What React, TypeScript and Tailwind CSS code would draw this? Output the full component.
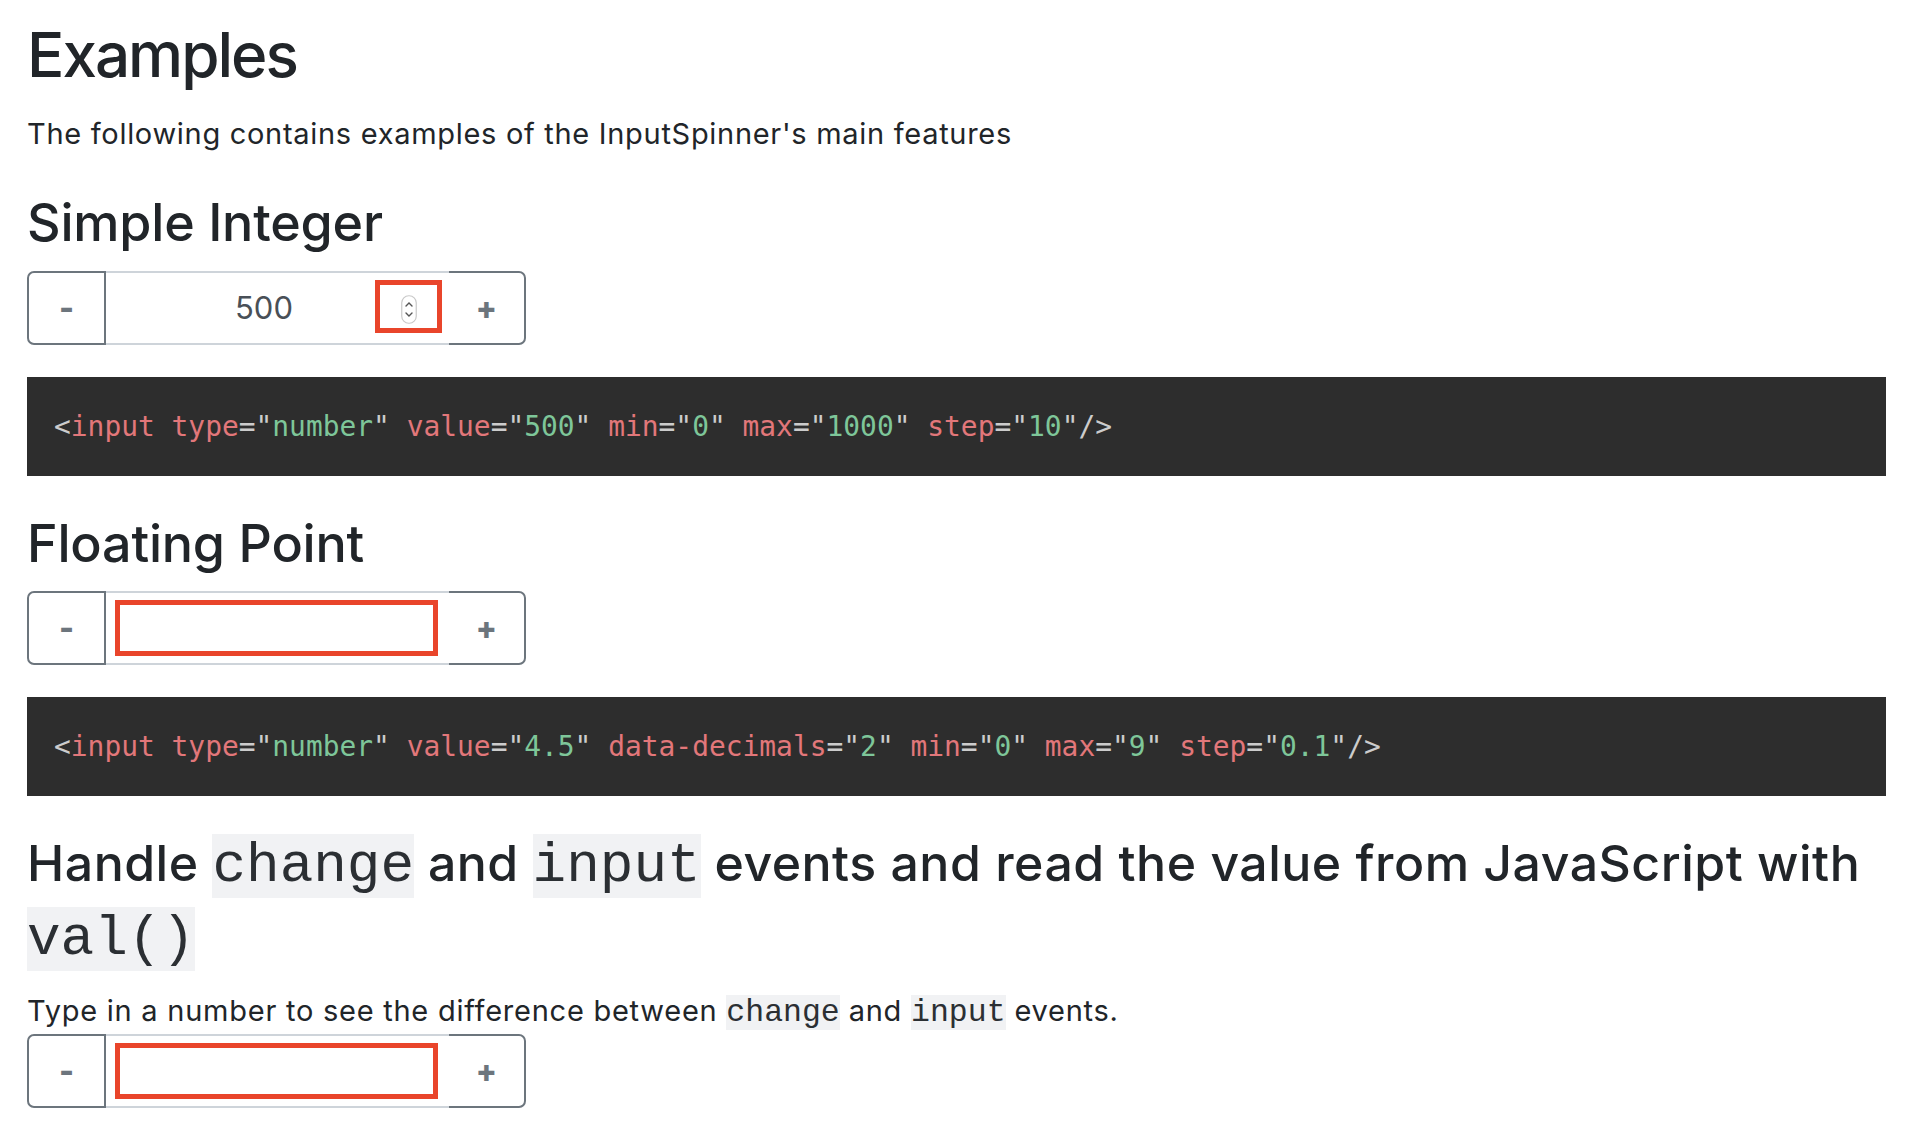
import React from 'react';

const sans = "font-['Inter','Helvetica_Neue',Arial,sans-serif]";
const mono = "font-['Liberation_Mono','Courier_New',monospace]";

type Tok = { t: string; c: 'p' | 'a' | 'v' };

function tokens(attrs: [string, string][]): Tok[] {
  const out: Tok[] = [{ t: '<', c: 'p' }, { t: 'input', c: 'a' }];
  attrs.forEach(([name, value]) => {
    out.push({ t: ' ' + name, c: 'a' });
    out.push({ t: '="', c: 'p' });
    out.push({ t: value, c: 'v' });
    out.push({ t: '"', c: 'p' });
  });
  out.push({ t: '/>', c: 'p' });
  return out;
}

const tokColor = {
  p: 'text-[#cccccc]',
  a: 'text-[#e2777a]',
  v: 'text-[#7ec699]',
};

function CodeBlock({ attrs }: { attrs: [string, string][] }) {
  return (
    <div className="mt-[32px] flex h-[99px] items-center bg-[#2d2d2d] pl-[27px]">
      <code className="whitespace-pre font-['DejaVu_Sans_Mono',monospace] text-[27.9px]">
        {tokens(attrs).map((tk, i) => (
          <span key={i} className={tokColor[tk.c]}>
            {tk.t}
          </span>
        ))}
      </code>
    </div>
  );
}

function NativeArrows() {
  return (
    <svg width="16" height="29" viewBox="0 0 16 29" className="absolute left-[295px] top-[22px]">
      <rect x="0.75" y="0.75" width="14.5" height="27.5" rx="7" fill="#fff" stroke="#c9c9c9" strokeWidth="1.2" />
      <path d="M5 11 L8 8 L11 11" fill="none" stroke="#555" strokeWidth="1.4" strokeLinecap="round" />
      <path d="M5 18 L8 21 L11 18" fill="none" stroke="#555" strokeWidth="1.4" strokeLinecap="round" />
    </svg>
  );
}

function Spinner({ value, mark }: { value?: string; mark: 'arrows' | 'field' }) {
  return (
    <div className={`flex h-[74px] w-[499px] ${sans}`}>
      <button className="w-[79px] rounded-l-[7px] border-2 border-[#6c757d] bg-white text-[32px] font-extrabold text-[#6c757d]">
        -
      </button>
      <div className="relative flex flex-1 items-center justify-center border-y-2 border-[#ced4da] bg-white pr-[27px] text-[31px] text-[#495057]">
        {value}
        {mark === 'arrows' ? (
          <>
            <NativeArrows />
            <div className="absolute left-[269px] top-[7px] h-[53px] w-[67px] border-[5px] border-[#e9452b]" />
          </>
        ) : (
          <div className="absolute left-[9px] right-[11px] top-[7px] bottom-[7px] border-[5px] border-[#e9452b]" />
        )}
      </div>
      <button className="-ml-[2px] w-[79px] rounded-r-[7px] border-2 border-[#6c757d] bg-white text-[31px] font-extrabold text-[#6c757d]">
        +
      </button>
    </div>
  );
}

function Code({ children, big }: { children: React.ReactNode; big?: boolean }) {
  return (
    <code
      className={
        big
          ? `${mono} bg-[#f1f2f4] text-[56px] font-normal tracking-normal text-[#2b2f33]`
          : `${mono} bg-[#f1f2f4] text-[31.5px] tracking-normal text-[#2b2f33]`
      }
    >
      {children}
    </code>
  );
}

export default function App() {
  return (
    <div className={`min-h-screen bg-white pl-[27px] pr-[28px] pt-[17px] text-[#212529] ${sans}`}>
      <h1 className="text-[62px] font-medium leading-[76px] tracking-[-2px]">Examples</h1>
      <p className="mt-[23px] text-[29px] leading-[35px] tracking-[0.7px]">
        The following contains examples of the InputSpinner's main features
      </p>

      <h2 className="mt-[41px] text-[52px] font-medium leading-[62px] tracking-[-0.2px]">Simple Integer</h2>
      <div className="mt-[17px]">
        <Spinner value="500" mark="arrows" />
      </div>
      <CodeBlock
        attrs={[
          ['type', 'number'],
          ['value', '500'],
          ['min', '0'],
          ['max', '1000'],
          ['step', '10'],
        ]}
      />

      <h2 className="mt-[37px] text-[52px] font-medium leading-[62px] tracking-[-0.2px]">Floating Point</h2>
      <div className="mt-[16px]">
        <Spinner mark="field" />
      </div>
      <CodeBlock
        attrs={[
          ['type', 'number'],
          ['value', '4.5'],
          ['data-decimals', '2'],
          ['min', '0'],
          ['max', '9'],
          ['step', '0.1'],
        ]}
      />

      <h3 className="mt-[32px] text-[50px] font-medium leading-[70px] tracking-[0.5px]">
        Handle <Code big>change</Code> and <Code big>input</Code> events and read the value from JavaScript with{' '}
        <Code big>val()</Code>
      </h3>
      <p className="mt-[19px] text-[29px] leading-[36px] tracking-[0.75px]">
        Type in a number to see the difference between <Code>change</Code> and <Code>input</Code> events.
      </p>
      <div className="mt-[3px] pb-[24px]">
        <Spinner mark="field" />
      </div>
    </div>
  );
}
